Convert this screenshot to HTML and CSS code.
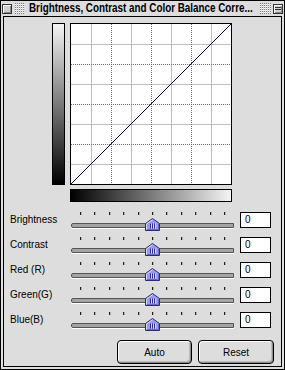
FILE: index.html
```html
<!DOCTYPE html>
<html lang="en">
<head>
    <meta charset="UTF-8">
    <title>Brightness, Contrast and Color Balance Correction</title>
    <link rel="stylesheet" href="styles.css">
</head>
<body>
    <!-- shared slider thumb -->
    <svg class="defs" width="0" height="0">
        <symbol id="thumb" viewBox="0 0 15 13">
            <path d="M0.5 12.5V5.5L7.5 0.5L14.5 5.5V12.5Z" fill="#9a9af0" stroke="#2c2c6e"/>
            <path d="M1.5 11.5V6L7.5 1.8" fill="none" stroke="#d4d4ff"/>
            <path d="M13.5 6V11.5H2" fill="none" stroke="#6a6ac0"/>
            <path d="M5.5 5.5v5M7.5 5.5v5M9.5 5.5v5" stroke="#2c2c8a"/>
            <path d="M6.5 5.5v5M8.5 5.5v5M10.5 5.5v5" stroke="#d8d8ff"/>
        </symbol>
    </svg>

    <div class="window">
        <div class="titlebar">
            <span class="closebox"></span>
            <span class="stripes"></span>
            <span class="title"><span class="title-text">Brightness, Contrast and Color Balance Corre...</span></span>
            <span class="stripes fill"></span>
            <span class="shadebox"></span>
        </div>

        <div class="frame">
            <!-- tone curve -->
            <div class="curve-row">
                <div class="vbar"></div>
                <svg class="graph" width="162" height="162" viewBox="0 0 162 162">
                    <rect x="0.5" y="0.5" width="161" height="161" fill="#fff" stroke="#000"/>
                    <g stroke="#bdbdbd" shape-rendering="crispEdges">
                        <path d="M21.5 1v160M61.5 1v160M101.5 1v160M141.5 1v160"/>
                        <path d="M1 21.5h160M1 61.5h160M1 101.5h160M1 141.5h160"/>
                    </g>
                    <g stroke="#6e6e6e" stroke-dasharray="1 1" shape-rendering="crispEdges">
                        <path d="M41.5 1v160M81.5 1v160M121.5 1v160"/>
                        <path d="M1 41.5h160M1 81.5h160M1 121.5h160"/>
                    </g>
                    <path d="M1 161L161 1" stroke="#00005a" stroke-width="1"/>
                </svg>
            </div>
            <div class="hbar"></div>

            <!-- sliders -->
            <div class="sliders">
                <div class="row">
                    <span class="label">Brightness</span>
                    <div class="slider">
                        <div class="ticks"><i></i><i></i><i></i><i></i><i></i><i></i><i></i><i></i><i></i><i></i><i></i></div>
                        <div class="track"></div>
                        <svg class="thumb"><use href="#thumb"/></svg>
                    </div>
                    <span class="value">0</span>
                </div>
                <div class="row">
                    <span class="label">Contrast</span>
                    <div class="slider">
                        <div class="ticks"><i></i><i></i><i></i><i></i><i></i><i></i><i></i><i></i><i></i><i></i><i></i></div>
                        <div class="track"></div>
                        <svg class="thumb"><use href="#thumb"/></svg>
                    </div>
                    <span class="value">0</span>
                </div>
                <div class="row">
                    <span class="label">Red (R)</span>
                    <div class="slider">
                        <div class="ticks"><i></i><i></i><i></i><i></i><i></i><i></i><i></i><i></i><i></i><i></i><i></i></div>
                        <div class="track"></div>
                        <svg class="thumb"><use href="#thumb"/></svg>
                    </div>
                    <span class="value">0</span>
                </div>
                <div class="row">
                    <span class="label">Green(G)</span>
                    <div class="slider">
                        <div class="ticks"><i></i><i></i><i></i><i></i><i></i><i></i><i></i><i></i><i></i><i></i><i></i></div>
                        <div class="track"></div>
                        <svg class="thumb"><use href="#thumb"/></svg>
                    </div>
                    <span class="value">0</span>
                </div>
                <div class="row">
                    <span class="label">Blue(B)</span>
                    <div class="slider">
                        <div class="ticks"><i></i><i></i><i></i><i></i><i></i><i></i><i></i><i></i><i></i><i></i><i></i></div>
                        <div class="track"></div>
                        <svg class="thumb"><use href="#thumb"/></svg>
                    </div>
                    <span class="value">0</span>
                </div>
            </div>

            <div class="buttons">
                <button class="btn auto">Auto</button>
                <button class="btn reset">Reset</button>
            </div>
        </div>
    </div>
</body>
</html>
```

FILE: styles.css
```css
/* Platinum-style dialog */
body {
    margin: 0;
    font-family: "Liberation Sans", Arial, sans-serif;
    font-size: 10px;
    color: #000;
}

.defs {
    position: absolute;
    width: 0;
    height: 0;
}

.window {
    width: 285px;
    height: 370px;
    box-sizing: border-box;
    border: 1px solid #000;
    background: #dddddd;
    display: flex;
    flex-direction: column;
}

/* title bar */
.titlebar {
    height: 15px;
    flex-shrink: 0;
    display: flex;
    align-items: center;
}

.closebox,
.shadebox {
    width: 10px;
    height: 10px;
    box-sizing: border-box;
    border: 1px solid #333;
    background: #cfcfcf;
    box-shadow: inset 1px 1px 0 #fff, inset -1px -1px 0 #8a8a8a;
}

.closebox {
    margin-left: 1px;
}

.shadebox {
    margin-right: 1px;
    background:
        linear-gradient(#333, #333) 1px 2px / 6px 1px no-repeat,
        linear-gradient(#333, #333) 1px 4px / 6px 1px no-repeat,
        #cfcfcf;
}

.stripes {
    width: 10px;
    height: 11px;
    margin-left: 2px;
    background:
        repeating-linear-gradient(90deg, #dddddd 0 1px, transparent 1px 2px),
        repeating-linear-gradient(#7a7a7a 0 1px, #ffffff 1px 2px);
}

.stripes.fill {
    flex: 1;
    width: auto;
    margin: 0 1px 0 5px;
}

/* Charcoal is narrow: squeeze the bold sans to its width */
.title {
    width: 225px;
    height: 15px;
    flex-shrink: 0;
    margin-left: 5px;
    overflow: hidden;
    line-height: 15px;
    white-space: nowrap;
}

.title-text {
    display: inline-block;
    font: bold 12px "Liberation Sans", Arial, sans-serif;
    transform: scaleX(0.82);
    transform-origin: 0 50%;
}

/* content frame */
.frame {
    flex: 1;
    margin: 0 2px 2px;
    border: 1px solid #000;
}

.curve-row {
    display: flex;
    gap: 5px;
    margin: 6px 0 0 48px;
}

.vbar {
    width: 13px;
    height: 162px;
    box-sizing: border-box;
    border: 1px solid #000;
    background: linear-gradient(#f4f4f4, #000);
}

.graph {
    display: block;
}

.hbar {
    width: 162px;
    height: 13px;
    box-sizing: border-box;
    margin: 4px 0 0 66px;
    border: 1px solid #000;
    background: linear-gradient(90deg, #000, #f4f4f4);
}

/* slider rows */
.sliders {
    margin: 9px 0 0 6px;
}

.row {
    display: grid;
    grid-template-columns: 60px 170px 31px;
    align-items: start;
    height: 25px;
}

.label {
    padding-top: 3px;
    line-height: 12px;
}

.slider {
    position: relative;
    width: 165px;
    height: 20px;
}

.ticks {
    display: flex;
    justify-content: space-between;
    width: 145px;
    margin: 1px 0 0 10px;
}

.ticks i {
    width: 1px;
    height: 3px;
    background: #222;
    box-shadow: 1px 0 0 #aaa;
}

.track {
    width: 163px;
    height: 5px;
    box-sizing: border-box;
    margin: 8px 0 0 1px;
    border: 1px solid #555;
    border-radius: 2px 0 0 2px;
    background: #a4a4a4;
    box-shadow: 0 1px 0 #fff;
}

.thumb {
    position: absolute;
    left: 75px;
    top: 7px;
    width: 15px;
    height: 13px;
}

.value {
    box-sizing: border-box;
    width: 31px;
    height: 16px;
    margin-top: 1px;
    padding-left: 4px;
    border: 1px solid #000;
    background: #fff;
    line-height: 14px;
}

/* buttons */
.buttons {
    display: flex;
    justify-content: flex-end;
    gap: 6px;
    margin-top: 4px;
    padding-right: 7px;
}

.btn {
    height: 24px;
    padding: 0;
    border: 1px solid #000;
    border-radius: 4px;
    background: #dddddd;
    box-shadow: inset 1px 1px 0 #fff, inset -1px -1px 0 #8c8c8c, inset -2px -2px 0 #bbbbbb;
    font: 10px "Liberation Sans", Arial, sans-serif;
    color: #000;
}

.btn.auto {
    width: 75px;
}

.btn.reset {
    width: 76px;
}
```
